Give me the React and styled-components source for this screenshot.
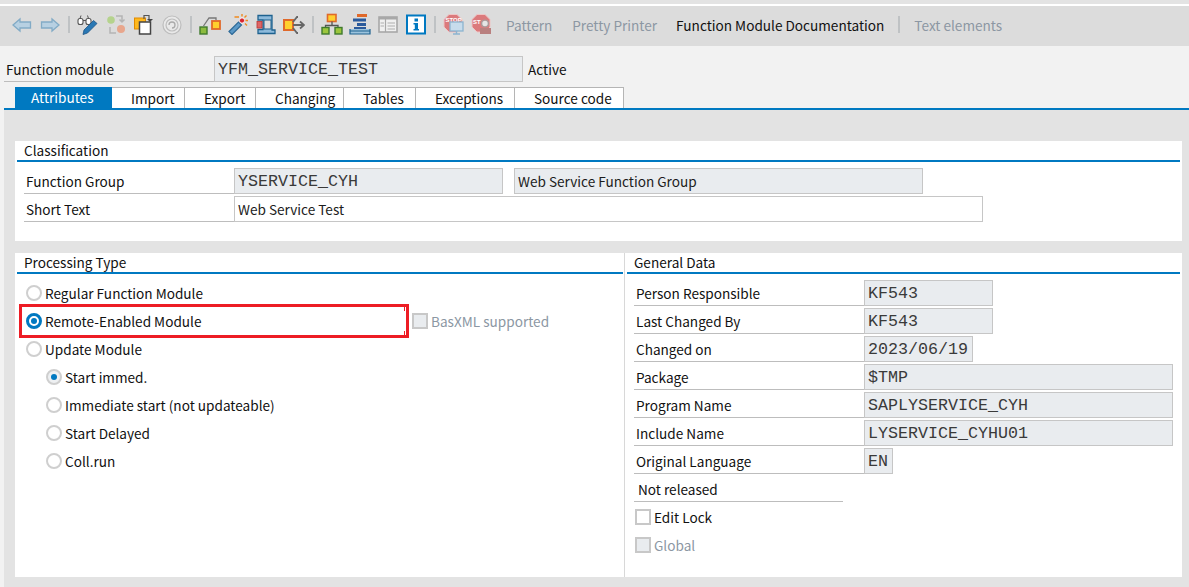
import React from 'react';
import styled, { createGlobalStyle } from 'styled-components';

const Global = createGlobalStyle`
  html, body { margin: 0; padding: 0; background: #e3e3e3; }
  body { font-family: "Noto Sans CJK SC", "Noto Sans", "Liberation Sans", sans-serif; font-size: 13.6px; color: #111; overflow: hidden; }
`;
const Page = styled.div`width: 1189px; height: 587px; background: #e3e3e3; display: flex; flex-direction: column; overflow: hidden;`;
const TopStrip = styled.div`height: 4px; flex: none; background: #e3e3e3; border-bottom: 2px solid #fff; box-sizing: content-box;`;
const Toolbar = styled.div`height: 40px; flex: none; background: #dcdcdc; display: flex; align-items: center; padding: 0 0 4px 8px; box-sizing: border-box;`;
const Slot = styled.div`width: 28px; height: 22px; display: flex; align-items: center; justify-content: center; flex: none;`;
const Sep = styled.div`width: 2px; height: 17px; background: #bfc2c4; margin: 0 4px; flex: none;`;
const TBtn = styled.span`font-size: 13.6px; line-height: 20px; padding-top: 2px; white-space: nowrap; flex: none; color: ${p => p.$on ? '#111' : '#8c97a3'}; margin-left: ${p => p.$ml}px;`;
const TSep = styled(Sep)`margin: 0 0 0 14px;`;

const Header = styled.div`height: 64px; flex: none; background: #f2f2f2; display: flex; flex-direction: column; box-sizing: border-box; padding-top: 10px;`;
const ModuleRow = styled.div`display: flex; height: 26px; margin-left: 4px; flex: none;`;
const ModuleLabel = styled.div`width: 210px; padding-left: 2px; box-sizing: border-box; border-bottom: 1px solid #bdbdbd; line-height: 26px;`;
const ModuleField = styled.div`width: 309px; height: 26px; box-sizing: border-box; border: 1px solid #c6c6c6; background: #e9ecef; padding-left: 3px; font: 16.67px/26px "Liberation Mono", monospace; color: #3a3a3a;`;
const ModuleState = styled.div`margin-left: 5px; line-height: 26px;`;
const Tabs = styled.div`display: flex; margin: 5px 0 0 4px; padding-left: 11px; border-bottom: 2px solid #0079c1; height: 21px; flex: none;`;
const Tab = styled.div`
  width: ${p => p.$w}px; box-sizing: border-box; padding-left: ${p => p.$active ? 16 : 19}px;
  line-height: 20px; white-space: nowrap;
  background: ${p => p.$active ? '#0079c1' : '#fff'};
  color: ${p => p.$active ? '#fff' : '#111'};
  border-top: ${p => p.$active ? 'none' : '1px solid #b5b5b5'};
  border-right: ${p => p.$active ? 'none' : '1px solid #b5b5b5'};
`;

const Workspace = styled.div`flex: 1; display: flex; flex-direction: column; padding: 31px 7px 10px 11px; gap: 12px; border-left: 4px solid #f2f2f2; box-sizing: border-box;`;
const Panel = styled.div`background: #fff; height: ${p => p.$h}px; flex: none; display: ${p => p.$split ? 'flex' : 'block'}; box-sizing: border-box;`;
const Column = styled.div`
  width: ${p => p.$w ? `${p.$w}px` : 'auto'}; flex: ${p => p.$w ? 'none' : 1}; box-sizing: border-box;
  border-right: ${p => p.$divider ? '1px solid #d8d8d8' : 'none'};
`;
const PanelTitle = styled.div`
  height: 21px; box-sizing: border-box; margin: 0 ${p => p.$mr ?? 2}px 0 2px; padding-left: ${p => p.$pl ?? 7}px; line-height: 19px;
  border-bottom: 2px solid #0079c1;
`;
const Rows = styled.div`padding: 6px 0 0 ${p => p.$pl}px; display: flex; flex-direction: column; gap: 2px;`;
const Row = styled.div`display: flex; height: 26px;`;
const Label = styled.div`
  width: ${p => p.$w}px; flex: none; box-sizing: border-box; padding-left: ${p => p.$pl ?? 2}px;
  border-bottom: 1px solid #bdbdbd; line-height: 26px; height: 26px; white-space: nowrap;
`;
const Field = styled.div`
  width: ${p => p.$w}px; height: 26px; flex: none; box-sizing: border-box; border: 1px solid #c6c6c6;
  background: ${p => p.$white ? '#fff' : '#e9ecef'}; padding-left: 3px; white-space: nowrap;
  margin-left: ${p => p.$ml || 0}px; color: #1c1c1c;
  ${p => p.$mono
    ? 'font: 16.67px/26px "Liberation Mono", monospace; color: #3a3a3a;'
    : 'line-height: 25px;'}
`;

const Options = styled.div`padding: 5px 0 0 11px; display: flex; flex-direction: column;`;
const OptionRow = styled.div`position: relative; display: flex; align-items: center; height: 28px; margin-left: ${p => p.$indent || 0}px;`;
const Radio = styled.span`
  width: 16px; height: 16px; border-radius: 50%; box-sizing: border-box; flex: none; display: flex; align-items: center; justify-content: center;
  border: ${p => p.$on === 'strong' ? '3px solid #0079c1' : '2px solid #cfcfcf'};
  background: ${p => p.$on === 'soft' ? '#eef0f2' : '#fff'};
  &::after { content: ""; width: 6px; height: 6px; border-radius: 50%; background: ${p => p.$on ? '#0079c1' : 'transparent'}; }
`;
const OptionText = styled.span`margin-left: 3px; padding-bottom: 1px; width: ${p => p.$w || 'auto'}; white-space: nowrap; flex: none; color: ${p => p.$muted ? '#8c97a3' : '#111'};`;
const Check = styled.span`width: 16px; height: 16px; flex: none; box-sizing: border-box; border: 2px solid #c8c8c8; background: ${p => p.$muted ? '#e9ecef' : '#fff'};`;
const Highlight = styled.div`
  position: absolute; left: -7px; top: -3px; width: 390px; height: 34px; box-sizing: border-box; border: 3px solid #ed1c24; pointer-events: none;
  &::before, &::after { content: ""; position: absolute; right: 1px; width: 1px; height: 4px; background: #ed1c24; }
  &::before { top: 0; }
  &::after { bottom: 0; }
`;
const GeneralOption = styled(OptionRow)`margin-left: 1px;`;
const OptionsAfter = styled.div`display: flex; flex-direction: column; margin-top: -1px;`;
const StopLabel = styled.text`font: bold 6px "Liberation Sans", sans-serif; fill: #fff;`;

const Ico = ({ children }) => <Slot><svg width="22" height="22" viewBox="0 0 22 22">{children}</svg></Slot>;

const Back = () => <Ico><path d="M2 12 L9 6 V9 H19.5 V15 H9 V18 Z" fill="#b7d0e2" stroke="#82abc6" strokeWidth="1.3"/></Ico>;
const Forward = () => <Ico><path d="M20 12 L13 6 V9 H2.5 V15 H13 V18 Z" fill="#b7d0e2" stroke="#82abc6" strokeWidth="1.3"/></Ico>;
const Glasses = () => <Ico>
  <rect x="1" y="5.5" width="5" height="6" rx="2" fill="#fff" stroke="#555" strokeWidth="1.1"/>
  <rect x="9" y="5.5" width="5" height="6" rx="2" fill="#fff" stroke="#555" strokeWidth="1.1"/>
  <path d="M6 7.5 H9 M3 5.5 L4 2.5 M11.5 5.5 L10.5 2.5" stroke="#555" strokeWidth="1" fill="none"/>
  <path d="M7 17 L16.5 7.5 L20 10.5 L10.5 20 L6 21.5 Z" fill="#2a78b4" stroke="#1d5686" strokeWidth=".8"/>
</Ico>;
const Cycle = () => <Ico>
  <circle cx="6" cy="7" r="3.8" fill="#b5d38d"/>
  <circle cx="16" cy="16" r="4" fill="#e8a68c"/>
  <path d="M11 3 H17 V8 M14.5 6.5 L17 9 L19.5 6.5 M11 20 H5 V14" fill="none" stroke="#b4b4b4" strokeWidth="1.5"/>
</Ico>;
const Activate = () => <Ico>
  <rect x="1.5" y="5" width="11" height="11" fill="#ffb81c" stroke="#e08a00" strokeWidth="1"/>
  <rect x="6.5" y="9" width="11" height="12" fill="#fff" stroke="#444" strokeWidth="1.5"/>
  <path d="M11 6 V2.5 H16 V6" fill="none" stroke="#555" strokeWidth="1.2"/>
  <path d="M14 6 H20 L17 9 Z" fill="#444"/>
</Ico>;
const Spiral = () => <Ico>
  <circle cx="11" cy="12" r="9" fill="#e9e9e9" stroke="#bdbdbd" strokeWidth="1.2"/>
  <circle cx="11" cy="12" r="6" fill="none" stroke="#bdbdbd" strokeWidth="1.2"/>
  <path d="M8 12 a3 3 0 1 1 3 3" fill="none" stroke="#aaa" strokeWidth="1.3"/>
</Ico>;
const Nodes = () => <Ico>
  <rect x="1" y="14" width="7" height="7" fill="#8cbb3f" stroke="#3f7a2d" strokeWidth="1.4"/>
  <rect x="13" y="8" width="8" height="8" fill="#ffd02e" stroke="#e0692a" strokeWidth="1.8"/>
  <path d="M4.5 13 L10 5 H17 V7" fill="none" stroke="#777" strokeWidth="1.3"/>
</Ico>;
const Wand = () => <Ico>
  <path d="M2 18.5 L11.5 9 L14.5 12 L5 21.5 Z" fill="#5c99c7" stroke="#2e6a98" strokeWidth="1.2"/>
  <circle cx="15" cy="7.5" r="2.6" fill="#d9232e" stroke="#fff" strokeWidth=".8"/>
  <path d="M7.5 4 H12 M15 1 V3.5 M19.5 2.5 L17.5 4.5 M18.5 7.5 H21 M18 10.5 L20 12.5" stroke="#ef8a1f" strokeWidth="1.4"/>
</Ico>;
const Clamp = () => <Ico>
  <path d="M3 2.5 H17 V17 H20 V20.5 H3 V16.5 H8 V7 H3 Z" fill="#8dbadb" stroke="#1e628f" strokeWidth="1.3"/>
  <rect x="2" y="8.5" width="5" height="6.5" fill="#d66" stroke="#b33" strokeWidth=".8"/>
  <rect x="9" y="7" width="7" height="9" fill="#dcdcdc" stroke="#1e628f" strokeWidth="1"/>
</Ico>;
const Branch = () => <Ico>
  <rect x="1" y="7" width="9" height="10" fill="#ffd02e" stroke="#e0692a" strokeWidth="2"/>
  <path d="M10 12 H20 M17 8.5 L21 12 L17 15.5 M10 9 L14 4 H15 M10 15 L14 20 H15" fill="none" stroke="#666" strokeWidth="1.8"/>
</Ico>;
const Tree = () => <Ico>
  <rect x="6.5" y="1.5" width="8.5" height="7" fill="#ffd02e" stroke="#e0692a" strokeWidth="1.6"/>
  <path d="M11 8.5 V12.5 M4.5 14.5 V12.5 H17 V14.5" fill="none" stroke="#555" strokeWidth="1.3"/>
  <rect x="1" y="14.5" width="7" height="6.5" fill="#9cc63d" stroke="#3f7a2d" strokeWidth="1.4"/>
  <rect x="14" y="14.5" width="7" height="6.5" fill="#9cc63d" stroke="#3f7a2d" strokeWidth="1.4"/>
</Ico>;
const Stack = () => <Ico>
  <rect x="8" y="1" width="10" height="3" fill="#e0692a"/>
  <rect x="4" y="5.5" width="13" height="3" fill="#2a5a9c"/>
  <rect x="8" y="10" width="9" height="3" fill="#2a5a9c"/>
  <rect x="5" y="14" width="12" height="3" fill="#2a5a9c"/>
  <path d="M1 16 V21 H21 V16 M1 18 H21" fill="#9cc3dd" stroke="#1e628f" strokeWidth="1.2"/>
</Ico>;
const Panes = () => <Ico>
  <rect x="2" y="4" width="18" height="15" fill="#f0f0f0" stroke="#a8a8a8" strokeWidth="1.6"/>
  <rect x="2" y="4" width="18" height="2.5" fill="#a8a8a8"/>
  <path d="M8.5 6 V19" stroke="#a8a8a8" strokeWidth="1.2"/>
  <path d="M3.5 10 H7 M3.5 13 H7 M10.5 10 H18 M10.5 13 H18 M10.5 16 H18" stroke="#c4c4c4" strokeWidth="1.4"/>
</Ico>;
const Info = () => <Ico>
  <rect x="2" y="2.5" width="18" height="18" fill="#fff" stroke="#0079c1" strokeWidth="2"/>
  <rect x="9.5" y="5.5" width="3.5" height="3" fill="#0079c1"/>
  <path d="M8.5 10 H13 V16 H14 V17.5 H8.5 V16 H9.8 V11.5 H8.5 Z" fill="#0079c1"/>
</Ico>;
const StopScreen = () => <Ico>
  <path d="M6 1.5 H14 L19 6.5 V14 L14 19 H6 L1 14 V6.5 Z" fill="#db7a7c" stroke="#efc4c4" strokeWidth="1"/>
  <StopLabel x="2.5" y="9">STOP</StopLabel>
  <rect x="7" y="9" width="13" height="9" fill="#c7dcec" stroke="#8db4d0" strokeWidth="1.3"/>
  <path d="M13.5 18 V20.5 M10 21 H17" stroke="#8db4d0" strokeWidth="1.4"/>
</Ico>;
const StopLock = () => <Ico>
  <path d="M6 1.5 H14 L19 6.5 V14 L14 19 H6 L1 14 V6.5 Z" fill="#db7a7c" stroke="#efc4c4" strokeWidth="1"/>
  <StopLabel x="2" y="11">ST</StopLabel>
  <circle cx="14" cy="10.5" r="3.4" fill="#e5e5e5" stroke="#a99" strokeWidth="1.4"/>
  <rect x="9" y="15" width="11" height="6" fill="#b9807f"/>
</Ico>;

const TABS = [['Attributes', 97], ['Import', 73], ['Export', 71], ['Changing', 88], ['Tables', 72], ['Exceptions', 99], ['Source code', 109]];
const GENERAL = [
  ['Person Responsible', 'KF543', 129], ['Last Changed By', 'KF543', 129], ['Changed on', '2023/06/19', 109],
  ['Package', '$TMP', 309], ['Program Name', 'SAPLYSERVICE_CYH', 309], ['Include Name', 'LYSERVICE_CYHU01', 309], ['Original Language', 'EN', 29],
];

export default function App() {
  return (
    <Page>
      <Global />
      <TopStrip />
      <Toolbar>
        <Back /><Forward /><Sep />
        <Glasses /><Cycle /><Activate /><Spiral /><Sep />
        <Nodes /><Wand /><Clamp /><Branch /><Sep />
        <Tree /><Stack /><Panes /><Info /><Sep />
        <StopScreen /><StopLock />
        <TBtn $ml={10}>Pattern</TBtn>
        <TBtn $ml={20}>Pretty Printer</TBtn>
        <TBtn $ml={19} $on>Function Module Documentation</TBtn>
        <TSep />
        <TBtn $ml={14}>Text elements</TBtn>
      </Toolbar>
      <Header>
        <ModuleRow>
          <ModuleLabel>Function module</ModuleLabel>
          <ModuleField>YFM_SERVICE_TEST</ModuleField>
          <ModuleState>Active</ModuleState>
        </ModuleRow>
        <Tabs>
          {TABS.map(([t, w], i) => <Tab key={t} $w={w} $active={i === 0}>{t}</Tab>)}
        </Tabs>
      </Header>
      <Workspace>
        <Panel $h={100}>
          <PanelTitle>Classification</PanelTitle>
          <Rows $pl={9}>
            <Row>
              <Label $w={210}>Function Group</Label>
              <Field $w={269} $mono>YSERVICE_CYH</Field>
              <Field $w={409} $ml={11}>Web Service Function Group</Field>
            </Row>
            <Row>
              <Label $w={210}>Short Text</Label>
              <Field $w={749} $white>Web Service Test</Field>
            </Row>
          </Rows>
        </Panel>
        <Panel $h={324} $split>
          <Column $w={610} $divider>
            <PanelTitle $mr={1}>Processing Type</PanelTitle>
            <Options>
              <OptionRow><Radio /><OptionText>Regular Function Module</OptionText></OptionRow>
              <OptionRow>
                <Radio $on="strong" />
                <OptionText $w="367px">Remote-Enabled Module</OptionText>
                <Check $muted />
                <OptionText $muted>BasXML supported</OptionText>
                <Highlight />
              </OptionRow>
              <OptionRow><Radio /><OptionText>Update Module</OptionText></OptionRow>
              <OptionRow $indent={20}><Radio $on="soft" /><OptionText>Start immed.</OptionText></OptionRow>
              <OptionRow $indent={20}><Radio /><OptionText>Immediate start (not updateable)</OptionText></OptionRow>
              <OptionRow $indent={20}><Radio /><OptionText>Start Delayed</OptionText></OptionRow>
              <OptionRow $indent={20}><Radio /><OptionText>Coll.run</OptionText></OptionRow>
            </Options>
          </Column>
          <Column>
            <PanelTitle $pl={7}>General Data</PanelTitle>
            <Rows $pl={9}>
              {GENERAL.map(([l, v, w]) => (
                <Row key={l}><Label $w={230}>{l}</Label><Field $w={w} $mono>{v}</Field></Row>
              ))}
              <Row><Label $w={209} $pl={4}>Not released</Label></Row>
              <OptionsAfter>
                <GeneralOption><Check /><OptionText>Edit Lock</OptionText></GeneralOption>
                <GeneralOption><Check $muted /><OptionText $muted>Global</OptionText></GeneralOption>
              </OptionsAfter>
            </Rows>
          </Column>
        </Panel>
      </Workspace>
    </Page>
  );
}
